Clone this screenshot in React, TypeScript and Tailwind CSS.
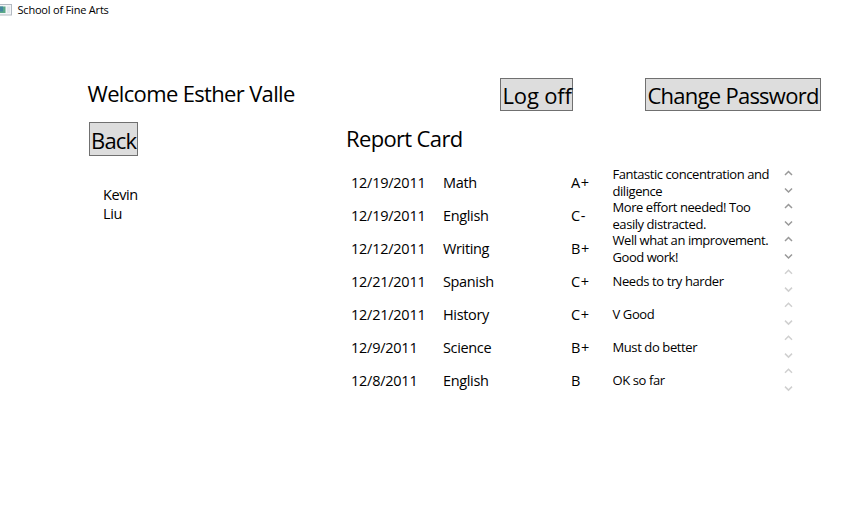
type Grade = {
  date: string;
  subject: string;
  grade: string;
  comment: string[];
  scrollable?: boolean;
};

const grades: Grade[] = [
  { date: "12/19/2011", subject: "Math", grade: "A+", comment: ["Fantastic concentration and", "diligence"], scrollable: true },
  { date: "12/19/2011", subject: "English", grade: "C-", comment: ["More effort needed! Too", "easily distracted."], scrollable: true },
  { date: "12/12/2011", subject: "Writing", grade: "B+", comment: ["Well what an improvement.", "Good work!"], scrollable: true },
  { date: "12/21/2011", subject: "Spanish", grade: "C+", comment: ["Needs to try harder"] },
  { date: "12/21/2011", subject: "History", grade: "C+", comment: ["V Good"] },
  { date: "12/9/2011", subject: "Science", grade: "B+", comment: ["Must do better"] },
  { date: "12/8/2011", subject: "English", grade: "B", comment: ["OK so far"] },
];

function ScrollArrows({ active }: { active?: boolean }) {
  return (
    <svg
      className={active ? "h-[33px] w-[10px] text-[#999999]" : "h-[33px] w-[10px] text-[#d0d0d0]"}
      viewBox="0 0 10 33"
      fill="none"
      stroke="currentColor"
      strokeWidth="1.5"
    >
      {active ? (
        <path d="M2 9L5.5 5.5L9 9M2 22.5L5.5 26L9 22.5" />
      ) : (
        <path d="M2 8.8L5.5 5.3L9 8.8M2 22.6L5.5 26.1L9 22.6" />
      )}
    </svg>
  );
}

function WindowIcon() {
  return (
    <svg className="h-3 w-3" viewBox="0 0 12 12">
      <rect x="-3" y="0.5" width="14.5" height="10.5" fill="#f3f5f7" stroke="#b3bac2" />
      <rect x="0" y="2.5" width="5.5" height="6.5" fill="#5aa888" />
      <rect x="0" y="2.5" width="3" height="5" fill="#4586a0" />
      <rect x="7" y="2.5" width="3" height="6.5" fill="#e3e7ec" />
    </svg>
  );
}

export default function App() {
  return (
    <div className="h-[517px] w-[860px] overflow-hidden bg-white font-['Open_Sans','Noto_Sans',sans-serif] whitespace-nowrap text-black">
      <header className="flex h-5 items-center">
        <WindowIcon />
        <span className="ml-[5.5px] text-[11px] leading-5 tracking-[-0.2px]">School of Fine Arts</span>
      </header>

      <div className="flex pt-[58px]">
        <h1 className="ml-[87.5px] w-[412.5px] text-[22px] leading-[31px] tracking-[-0.66px]">Welcome Esther Valle</h1>
        <button className="h-[33px] w-[73px] border border-[#707070] bg-[#dddddd] pl-[1.5px] text-left text-[22px] leading-[32px] tracking-[-0.15px]">
          Log off
        </button>
        <button className="ml-[72px] h-[33px] w-[176px] border border-[#707070] bg-[#dddddd] pl-[1.5px] text-left text-[22px] leading-[32px] tracking-[-0.74px]">
          Change Password
        </button>
      </div>

      <main className="flex pt-[11px]">
        <aside className="w-[346px] pl-[89px]">
          <button className="block h-[34px] w-[49px] border border-[#707070] bg-[#dddddd] pl-px text-left text-[22px] leading-[34px] tracking-[-0.8px]">
            Back
          </button>
          <div className="mt-[29px] ml-[14px] text-[14.5px] leading-[19px] tracking-[-0.4px]">
            <div>Kevin</div>
            <div>Liu</div>
          </div>
        </aside>
        <section>
          <h2 className="h-[44px] text-[22px] leading-[33px] tracking-[-0.65px]">Report Card</h2>
          {grades.map((g, i) => (
            <div key={i} className="flex h-[33px] pl-[5px] text-[14.5px] leading-[33px]">
              <div className="w-[92px] tracking-[-0.25px]">{g.date}</div>
              <div className="w-[128px] tracking-[-0.35px]">{g.subject}</div>
              <div className="w-[41.5px] tracking-[0.6px]">{g.grade}</div>
              <div className={g.comment.length > 1 ? "w-[170.5px] text-[13px] leading-[17px] tracking-[-0.44px]" : "w-[170.5px] text-[13px] leading-[33px] tracking-[-0.4px]"}>
                {g.comment.map((line) => (
                  <div key={line} className={g.comment.length > 1 ? "h-[16.5px]" : "h-[33px]"}>{line}</div>
                ))}
              </div>
              <ScrollArrows active={g.scrollable} />
            </div>
          ))}
        </section>
      </main>
    </div>
  );
}
